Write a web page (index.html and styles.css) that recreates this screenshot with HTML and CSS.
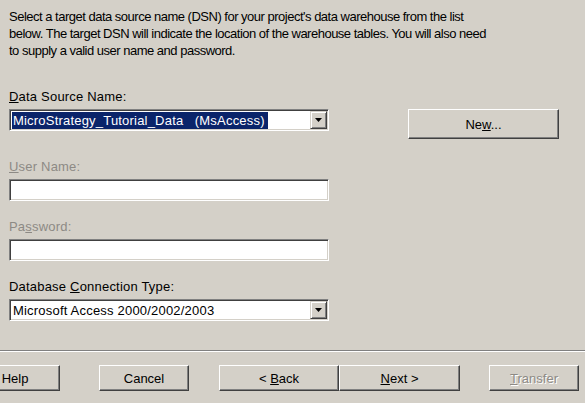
FILE: index.html
```html
<!DOCTYPE html>
<html lang="en">
<head>
  <meta charset="UTF-8" />
  <title>Warehouse Catalog - Data Source</title>
  <link rel="stylesheet" href="styles.css">
</head>
<body>
  <div class="wizard">
    <p class="intro">Select a target data source name (DSN) for your project's data warehouse from the list<br>below. The target DSN will indicate the location of the warehouse tables. You will also need<br>to supply a valid user name and password.</p>

    <div class="fields">
      <div class="row-dsn">
        <div class="field">
          <label class="field-label"><u>D</u>ata Source Name:</label>
          <div class="combo">
            <span class="combo-value selected">MicroStrategy_Tutorial_Data&nbsp;&nbsp;&nbsp;(MsAccess)</span>
            <span class="combo-btn"><svg width="7" height="4" viewBox="0 0 7 4"><polygon points="0,0 7,0 3.5,4" fill="#000"/></svg></span>
          </div>
        </div>
        <button class="btn btn-new">Ne<u>w</u>...</button>
      </div>

      <div class="field disabled">
        <label class="field-label"><u>U</u>ser Name:</label>
        <div class="textbox"></div>
      </div>

      <div class="field disabled">
        <label class="field-label">Pa<u>s</u>sword:</label>
        <div class="textbox"></div>
      </div>

      <div class="field">
        <label class="field-label">Database <u>C</u>onnection Type:</label>
        <div class="combo">
          <span class="combo-value">Microsoft Access 2000/2002/2003</span>
          <span class="combo-btn"><svg width="7" height="4" viewBox="0 0 7 4"><polygon points="0,0 7,0 3.5,4" fill="#000"/></svg></span>
        </div>
      </div>
    </div>

    <div class="separator"></div>

    <div class="buttons">
      <button class="btn btn-help">Help</button>
      <button class="btn btn-cancel">Cancel</button>
      <button class="btn btn-back">&lt; <u>B</u>ack</button>
      <button class="btn btn-next"><u>N</u>ext &gt;</button>
      <button class="btn btn-transfer" disabled><u>T</u>ransfer</button>
    </div>
  </div>
</body>
</html>
```

FILE: styles.css
```css
* {
  box-sizing: border-box;
}

body {
  margin: 0;
  background: #d4d0c8;
  font-family: "Liberation Sans", Arial, sans-serif;
  font-size: 13px;
  color: #000;
}

.wizard {
  width: 585px;
  height: 403px;
  overflow: hidden;
}

.intro {
  margin: 0;
  padding: 8px 0 0 9px;
  line-height: 17px;
  letter-spacing: -0.5px;
  white-space: nowrap;
}

.fields {
  margin-top: 30px;
  padding-left: 9px;
  display: flex;
  flex-direction: column;
  gap: 18px;
}

/* the New... button hangs 8px below the combo, so the row needs less space after it */
.row-dsn {
  display: flex;
  align-items: flex-start;
  margin-bottom: 2px;
}

.field {
  width: 320px;
  display: flex;
  flex-direction: column;
  gap: 4px;
}

.field-label {
  line-height: 16px;
  letter-spacing: 0.2px;
}

.disabled .field-label {
  color: #8d8a85;
}

/* sunken 3d edit / combo boxes */
.combo,
.textbox {
  height: 22px;
  background: #fff;
  border: 1px solid;
  border-color: #808080 #fff #fff #808080;
  box-shadow: inset 1px 1px #404040, inset -1px -1px #d4d0c8;
  padding: 1px;
  display: flex;
  align-items: center;
}

.combo-value {
  margin-left: 1px;
  padding: 0 3px 0 1px;
  line-height: 17px;
  letter-spacing: 0.2px;
  white-space: nowrap;
}

.combo-value.selected {
  background: #0a246a;
  color: #fff;
}

.combo-btn {
  margin-left: auto;
  width: 17px;
  height: 18px;
  background: #d4d0c8;
  border: 1px solid;
  border-color: #d4d0c8 #404040 #404040 #d4d0c8;
  box-shadow: inset 1px 1px #fff, inset -1px -1px #808080;
  display: flex;
  align-items: center;
  justify-content: center;
}

.combo-btn svg {
  display: block;
}

/* raised push buttons */
.btn {
  height: 26px;
  padding: 0;
  font: inherit;
  color: #000;
  background: #d4d0c8;
  border: 1px solid;
  border-color: #fff #404040 #404040 #fff;
  box-shadow: inset -1px -1px #808080;
  border-radius: 0;
}

.btn:disabled {
  color: #8d8a85;
  text-shadow: 1px 1px 0 #fff;
}

.btn-new {
  margin: 20px 0 0 79px;
  width: 151px;
  height: 30px;
}

.separator {
  margin-top: 29px;
  height: 2px;
  border-top: 1px solid #808080;
  border-bottom: 1px solid #fff;
}

.buttons {
  display: flex;
  margin: 13px 0 0 -30px;
}

.btn-help {
  width: 90px;
}

.btn-cancel {
  width: 90px;
  margin-left: 39px;
}

.btn-back {
  width: 120px;
  margin-left: 30px;
}

.btn-next {
  width: 121px;
}

.btn-transfer {
  width: 90px;
  margin-left: 29px;
}
```
